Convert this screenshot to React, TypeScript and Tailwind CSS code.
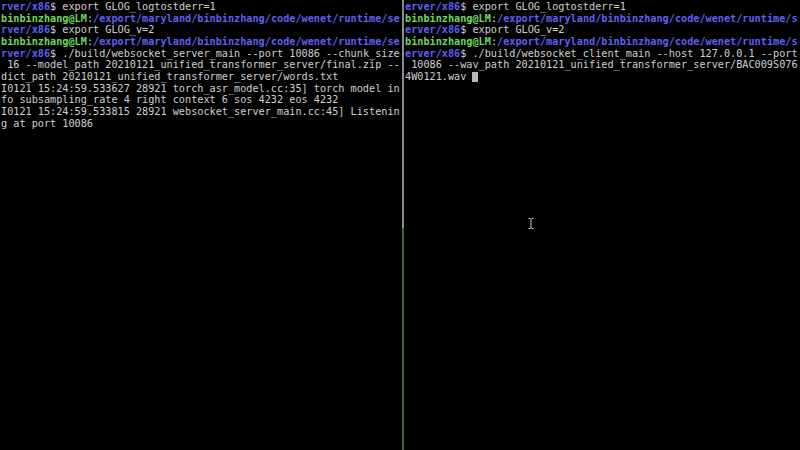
import React from "react";

const green = "text-[#6cd85c] font-bold";
const blue = "text-[#5f5ff0] font-bold";

type Seg = { t: string; c?: string };

// each terminal row is a list of coloured segments
const leftRows: Seg[][] = [
  [{ t: "rver/x86", c: blue }, { t: "$ export GLOG_logtostderr=1" }],
  [{ t: "binbinzhang@LM", c: green }, { t: ":" }, { t: "/export/maryland/binbinzhang/code/wenet/runtime/se", c: blue }],
  [{ t: "rver/x86", c: blue }, { t: "$ export GLOG_v=2" }],
  [{ t: "binbinzhang@LM", c: green }, { t: ":" }, { t: "/export/maryland/binbinzhang/code/wenet/runtime/se", c: blue }],
  [{ t: "rver/x86", c: blue }, { t: "$ ./build/websocket_server_main --port 10086 --chunk_size" }],
  [{ t: " 16 --model_path 20210121_unified_transformer_server/final.zip --" }],
  [{ t: "dict_path 20210121_unified_transformer_server/words.txt" }],
  [{ t: "I0121 15:24:59.533627 28921 torch_asr_model.cc:35] torch model in" }],
  [{ t: "fo subsampling_rate 4 right context 6 sos 4232 eos 4232" }],
  [{ t: "I0121 15:24:59.533815 28921 websocket_server_main.cc:45] Listenin" }],
  [{ t: "g at port 10086" }],
];

const rightRows: Seg[][] = [
  [{ t: "erver/x86", c: blue }, { t: "$ export GLOG_logtostderr=1" }],
  [{ t: "binbinzhang@LM", c: green }, { t: ":" }, { t: "/export/maryland/binbinzhang/code/wenet/runtime/s", c: blue }],
  [{ t: "erver/x86", c: blue }, { t: "$ export GLOG_v=2" }],
  [{ t: "binbinzhang@LM", c: green }, { t: ":" }, { t: "/export/maryland/binbinzhang/code/wenet/runtime/s", c: blue }],
  [{ t: "erver/x86", c: blue }, { t: "$ ./build/websocket_client_main --host 127.0.0.1 --port" }],
  [{ t: " 10086 --wav_path 20210121_unified_transformer_server/BAC009S076" }],
  [{ t: "4W0121.wav " }],
];

const Rows = ({ rows, cursor }: { rows: Seg[][]; cursor?: boolean }) => (
  <div className="pt-[1px]">
    {rows.map((row, i) => (
      <div key={i} className="h-[11.66px] leading-[11.66px] whitespace-pre flex items-center">
        {row.map((s, j) => (
          <span key={j} className={s.c ?? ""}>
            {s.t}
          </span>
        ))}
        {cursor && i === rows.length - 1 ? (
          <span className="inline-block w-[6px] h-[10px] bg-[#b8b8b8]" />
        ) : null}
      </div>
    ))}
  </div>
);

export default function App() {
  return (
    <div
      className="relative flex w-[800px] h-[450px] bg-black text-[#d0d0d0] text-[10.2px] overflow-hidden"
      style={{ fontFamily: '"DejaVu Sans Mono", "Liberation Mono", monospace' }}
    >
      <div className="w-[402px] pl-px overflow-hidden">
        <Rows rows={leftRows} />
      </div>

      {/* pane divider */}
      <div className="w-[2px] flex flex-col">
        <div className="h-[228px] bg-[#8a8a8a]" />
        <div className="flex-1 bg-[#3e6530]" />
      </div>

      <div className="flex-1 pl-px overflow-hidden">
        <Rows rows={rightRows} cursor />
      </div>

      {/* mouse I-beam */}
      <svg className="absolute left-[528px] top-[218px]" width="6" height="11" viewBox="0 0 6 11">
        <path d="M0.5 0.5h2M3.5 0.5h2M3 1v9M0.5 10.5h2M3.5 10.5h2" stroke="#cfcfcf" strokeWidth="1" fill="none" />
      </svg>
    </div>
  );
}
